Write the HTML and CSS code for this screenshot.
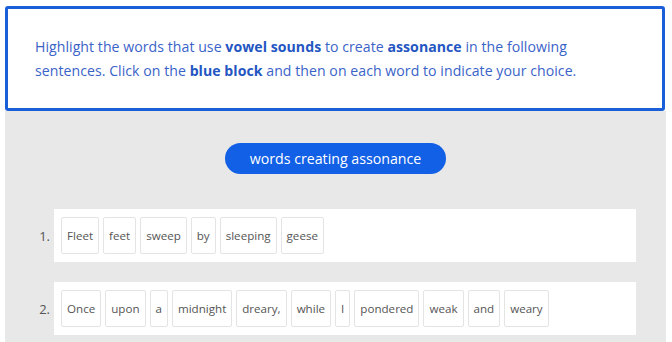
FILE: index.html
```html
<!DOCTYPE html>
<html lang="en">
<head>
    <meta charset="UTF-8">
    <title>Assonance</title>
    <link rel="stylesheet" href="styles.css">
</head>
<body>
    <div class="activity">
        <div class="instructions">
            <p>Highlight the words that use <b>vowel sounds</b> to create <b>assonance</b> in the following
            sentences. Click on the <b>blue block</b> and then on each word to indicate your choice.</p>
        </div>

        <div class="workspace">
            <div class="blocks">
                <button class="block">words creating assonance</button>
            </div>

            <div class="sentence">
                <span class="num">1.</span>
                <div class="card">
                    <span class="word">Fleet</span>
                    <span class="word">feet</span>
                    <span class="word">sweep</span>
                    <span class="word">by</span>
                    <span class="word">sleeping</span>
                    <span class="word">geese</span>
                </div>
            </div>

            <div class="sentence">
                <span class="num">2.</span>
                <div class="card">
                    <span class="word">Once</span>
                    <span class="word">upon</span>
                    <span class="word">a</span>
                    <span class="word">midnight</span>
                    <span class="word">dreary,</span>
                    <span class="word">while</span>
                    <span class="word">I</span>
                    <span class="word">pondered</span>
                    <span class="word">weak</span>
                    <span class="word">and</span>
                    <span class="word">weary</span>
                </div>
            </div>
        </div>
    </div>
</body>
</html>
```

FILE: styles.css
```css
body {
    margin: 6px 0 0 5px;
    font-family: 'Open Sans', sans-serif;
    background-color: #fff;
}

.activity {
    width: 661px;
}

.instructions {
    border: 3px solid #1a5fd8;
    border-radius: 3px;
    padding: 26px 27px 25px;
    width: 600px;
}

.instructions p {
    margin: 0;
    max-width: 560px;
    font-size: 14.1px;
    letter-spacing: 0.05px;
    line-height: 24px;
    color: #3a63c8;
}

.instructions b {
    color: #2456c2;
    font-weight: 700;
}

.workspace {
    background-color: #e8e8e8;
    padding: 32px 30px 0 0;
    height: 199px;
    overflow: hidden;
}

.blocks {
    display: flex;
    justify-content: center;
    padding-left: 30px;
    margin-bottom: 35px;
}

.block {
    background-color: #1160e6;
    color: #fff;
    border: none;
    border-radius: 16px;
    height: 31px;
    width: 221px;
    font-family: inherit;
    font-size: 14.2px;
}

.sentence {
    display: flex;
    align-items: center;
    margin-bottom: 20px;
}

.num {
    width: 45px;
    padding-right: 4px;
    text-align: right;
    font-size: 13px;
    color: #555;
}

.card {
    flex: 1;
    display: flex;
    gap: 4px;
    background-color: #fff;
    padding: 8px 7px;
}

.word {
    display: flex;
    align-items: center;
    height: 35px;
    padding: 0 5px;
    border: 1px solid #e4e4e4;
    border-radius: 2px;
    font-size: 11.6px;
    color: #555;
}
```
